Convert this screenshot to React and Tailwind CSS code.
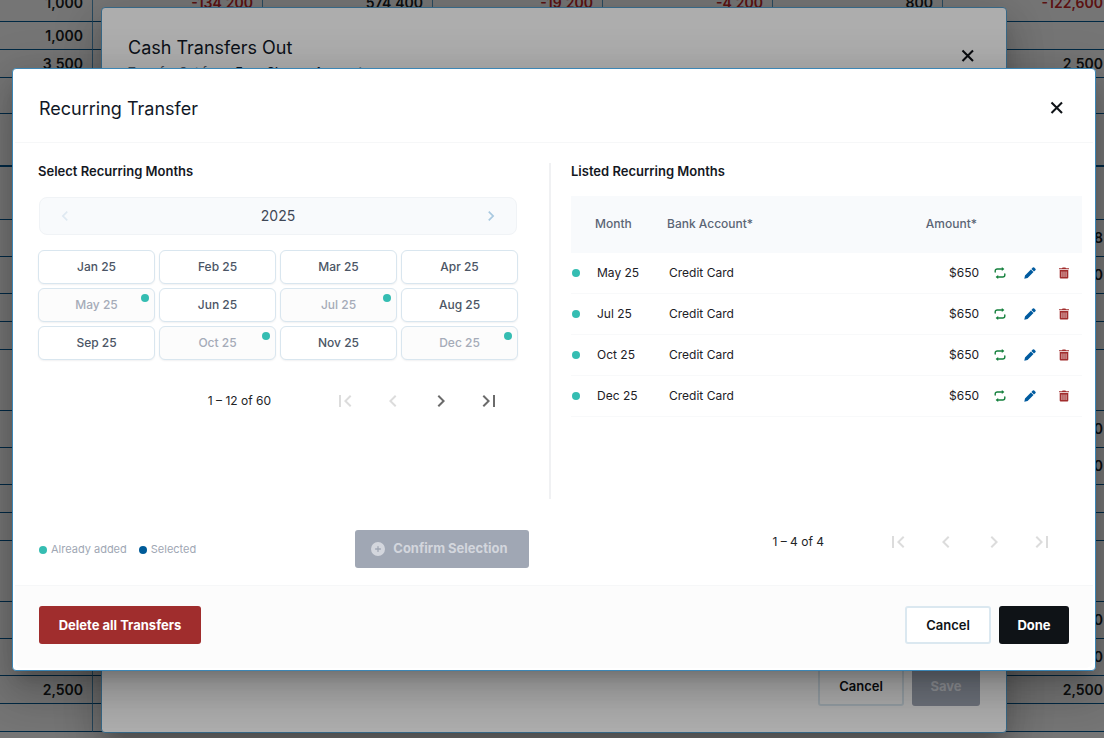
import { useState } from "react";
import { FaCirclePlus } from "react-icons/fa6";

// ─── Data ─────────────────────────────────────────────────────────────────────

const MONTHS = [
  { label: "Jan 25" },
  { label: "Feb 25" },
  { label: "Mar 25" },
  { label: "Apr 25" },
  { label: "May 25", added: true },
  { label: "Jun 25" },
  { label: "Jul 25", added: true },
  { label: "Aug 25" },
  { label: "Sep 25" },
  { label: "Oct 25", added: true },
  { label: "Nov 25" },
  { label: "Dec 25", added: true },
];

const TRANSFERS = MONTHS.filter((m) => m.added).map((m) => ({
  month: m.label,
  account: "Credit Card",
  amount: "$650",
}));

// Rows of the cash flow sheet behind the dialogs
const SHEET = [
  {
    h: "h-[37px]",
    cells: ["1,000", "-134,200", "574,400", "-19,200", "-4,200", "800", "-122,600"],
  },
  { h: "h-[28px]", cells: ["1,000"] },
  { h: "h-[28px]", cells: ["3,500", "", "", "", "", "", "2,500"] },
  { h: "h-[36px]", cells: [] },
  { h: "h-[53px]", cells: [], thick: true },
  { h: "h-[53px]", cells: [] },
  { h: "h-[37px]", cells: ["", "", "", "", "", "", "8"] },
  { h: "h-[37px]", cells: ["", "", "", "", "", "", "0"] },
  { h: "h-[28px]", cells: [] },
  { h: "h-[28px]", cells: [] },
  { h: "h-[61px]", cells: [] },
  { h: "h-[37px]", cells: ["", "", "", "", "", "", "0"] },
  { h: "h-[37px]", cells: ["", "", "", "", "", "", "0"] },
  { h: "h-[28px]", cells: [] },
  { h: "h-[28px]", cells: [] },
  { h: "h-[61px]", cells: [] },
  { h: "h-[37px]", cells: ["", "", "", "", "", "", "0"] },
  { h: "h-[37px]", cells: ["", "", "", "", "", "", "0"] },
  { h: "h-[28px]", cells: ["2,500", "", "", "", "", "", "2,500"] },
  { h: "h-[28px]", cells: [] },
];

const COLUMNS = [0, 1, 2, 3, 4, 5, 6];

const CHEVRONS = {
  first: "M18.41 16.59L13.82 12l4.59-4.59L17 6l-6 6 6 6zM6 6h2v12H6z",
  prev: "M15.41 7.41L14 6l-6 6 6 6 1.41-1.41L10.83 12z",
  next: "M10 6L8.59 7.41 13.17 12l-4.58 4.59L10 18l6-6z",
  last: "M5.59 7.41L10.18 12l-4.59 4.59L7 18l6-6-6-6zM16 6h2v12h-2z",
};

// ─── Small pieces ─────────────────────────────────────────────────────────────

function Chevron({ name, className }) {
  return (
    <svg className={className} viewBox="0 0 24 24" fill="currentColor">
      <path d={CHEVRONS[name]} />
    </svg>
  );
}

function RepeatIcon() {
  return (
    <svg className="w-3 h-3" viewBox="0 0 12 12" fill="currentColor">
      <path
        d="M1.2 5V4a2 2 0 0 1 2-2H8.5M10.8 7v1a2 2 0 0 1-2 2H3.5"
        fill="none"
        stroke="currentColor"
        strokeWidth={1.4}
        strokeLinecap="round"
      />
      <path d="M7.8 0L10.4 2L7.8 4zM4.2 8L1.6 10L4.2 12z" />
    </svg>
  );
}

function PencilIcon() {
  return (
    <svg className="w-3 h-3" viewBox="0 0 12 12" fill="currentColor">
      <path d="M0.3 11.7L1 8.4L6.9 2.5L9.5 5.1L3.6 11zM7.4 2L8.8 0.6a1 1 0 0 1 1.4 0L11.4 1.8a1 1 0 0 1 0 1.4L10 4.6z" />
    </svg>
  );
}

function TrashIcon() {
  return (
    <svg className="w-3 h-3" viewBox="0 0 12 12" fill="currentColor">
      <path d="M1 1.2h3L4.6 0.4h2.8L8 1.2h3v1.1H1z" />
      <path
        fillRule="evenodd"
        d="M1.7 3h8.6v7.6a1 1 0 0 1-1 1H2.7a1 1 0 0 1-1-1zM3.6 4.6v5.4h0.7V4.6zM5.65 4.6v5.4h0.7V4.6zM7.7 4.6v5.4h0.7V4.6z"
      />
    </svg>
  );
}

function CloseButton() {
  return (
    <button
      aria-label="Close"
      className="w-6 h-6 flex items-center justify-center text-[#0f1317]"
    >
      <svg
        className="w-6 h-6"
        viewBox="0 0 24 24"
        fill="none"
        stroke="currentColor"
        strokeWidth={2.1}
      >
        <path d="M6.5 6.5l10.5 10.5M17 6.5l-10.5 10.5" />
      </svg>
    </button>
  );
}

function Dot({ className }) {
  return <span className={`block w-2 h-2 rounded-full shrink-0 ${className}`} />;
}

function Pager({ text, hasNext }) {
  const nextColour = hasNext ? "text-[#6b6b6b]" : "text-[#dcdcdc]";
  const items = [
    { name: "first", label: "First page", colour: "text-[#dcdcdc]", off: true },
    { name: "prev", label: "Previous page", colour: "text-[#dcdcdc]", off: true },
    { name: "next", label: "Next page", colour: nextColour, off: !hasNext },
    { name: "last", label: "Last page", colour: nextColour, off: !hasNext },
  ];
  return (
    <div className="flex items-center justify-end h-12">
      <span className="text-xs text-[#222427]">{text}</span>
      <div className="flex ml-[50px]">
        {items.map((i) => (
          <button
            key={i.name}
            aria-label={i.label}
            disabled={i.off}
            className={`w-12 h-12 flex items-center justify-center ${i.colour}`}
          >
            <Chevron name={i.name} className="w-6 h-6" />
          </button>
        ))}
      </div>
    </div>
  );
}

// ─── Sheet in the background ──────────────────────────────────────────────────

function Sheet() {
  return (
    <div className="absolute inset-0 flex flex-col justify-end overflow-hidden pb-[6px] bg-white">
      <table className="table-fixed border-separate border-spacing-0 w-[1113px] shrink-0">
        <colgroup>
          <col className="w-[93px]" />
          {COLUMNS.slice(1).map((c) => (
            <col key={c} className="w-[170px]" />
          ))}
        </colgroup>
        <tbody>
          {SHEET.map((row, i) => (
            <tr key={i} className={row.h}>
              {COLUMNS.map((c) => (
                <td
                  key={c}
                  className={`p-0 pr-[9px] text-right text-sm font-semibold border-r border-r-[#5ba3d0] border-b-[#005b96] ${
                    row.thick ? "border-b-2" : "border-b"
                  } ${row.cells[c]?.startsWith("-") ? "text-[#c62828]" : "text-[#1b1f24]"}`}
                >
                  {row.cells[c]}
                </td>
              ))}
            </tr>
          ))}
        </tbody>
      </table>
    </div>
  );
}

// ─── Cash transfers dialog ────────────────────────────────────────────────────

function CashTransfersDialog() {
  return (
    <div className="absolute inset-0 bg-black/32 flex justify-center pl-1 pt-[7px] pb-[5px]">
      <section className="w-full max-w-[906px] rounded border border-[#5298c4] bg-white flex flex-col justify-between shadow-[0_11px_15px_-7px_rgba(0,0,0,0.2),0_24px_38px_3px_rgba(0,0,0,0.14),0_9px_46px_8px_rgba(0,0,0,0.12)]">
        <header className="flex items-start justify-between px-[26px] pt-[26px]">
          <div>
            <h2 className="text-[18px] leading-7 text-[#111827]">
              Cash Transfers Out
            </h2>
            <p className="text-xs leading-5 text-[#5b6472]">
              Transfer Out from:{" "}
              <span className="font-medium text-[#111827]">
                Easy Chase - Account
              </span>
            </p>
          </div>
          <div className="pt-[10px]">
            <CloseButton />
          </div>
        </header>
        <footer className="flex justify-end gap-2 px-[26px] pb-[26px]">
          <button className="h-[38px] w-[86px] rounded-[3px] border-2 border-[#dbe8f0] bg-white text-[13px] font-semibold text-[#0f1317]">
            Cancel
          </button>
          <button
            disabled
            className="h-[38px] w-[68px] rounded-[3px] bg-[#a0a7b4] text-[13px] font-bold text-[#d3d6dd]"
          >
            Save
          </button>
        </footer>
      </section>
    </div>
  );
}

// ─── Recurring transfer dialog ────────────────────────────────────────────────

function MonthPicker() {
  const [selected, setSelected] = useState([]);

  const toggle = (label) =>
    setSelected((prev) =>
      prev.includes(label) ? prev.filter((l) => l !== label) : [...prev, label],
    );

  return (
    <div className="w-[511px] shrink-0 pl-[23px]">
      <h3 className="text-[13px] leading-4 font-semibold text-[#14181f]">
        Select Recurring Months
      </h3>
      <div className="mt-[18px] ml-px w-[478px] h-[38px] px-[11px] flex items-center justify-between rounded-lg border border-[#f0f3f6] bg-[#f8fafc]">
        <button aria-label="Previous year" disabled className="p-1 text-[#dfe9f1]">
          <Chevron name="prev" className="w-5 h-5" />
        </button>
        <span className="text-sm text-[#3f4756]">2025</span>
        <button aria-label="Next year" className="p-1 text-[#a9c9e0]">
          <Chevron name="next" className="w-5 h-5" />
        </button>
      </div>
      <div className="mt-[15px] w-[480px] grid grid-cols-4 gap-1">
        {MONTHS.map((m) => (
          <button
            key={m.label}
            disabled={m.added}
            onClick={() => toggle(m.label)}
            className={`relative h-[34px] rounded-md border border-[#d9e6ef] text-xs font-medium shadow-[0_1px_2px_rgba(16,24,40,0.06)] ${
              m.added ? "bg-[#fcfcfc] text-[#a5abb8]" : "bg-white text-[#4b5565]"
            }`}
          >
            {m.label}
            {(m.added || selected.includes(m.label)) && (
              <Dot
                className={`absolute top-[5px] right-[5px] ${
                  m.added ? "bg-[#35bdb2]" : "bg-[#005b99]"
                }`}
              />
            )}
          </button>
        ))}
      </div>
      <div className="mt-[17px] pr-[13px]">
        <Pager text="1 – 12 of 60" hasNext />
      </div>
    </div>
  );
}

function TransferTable() {
  return (
    <div className="flex-1 min-w-0 pl-5 pr-[11px]">
      <h3 className="text-[13px] leading-4 font-semibold text-[#14181f]">
        Listed Recurring Months
      </h3>
      <table className="mt-[17px] w-full table-fixed border-separate border-spacing-0 text-xs text-[#1c2026]">
        <colgroup>
          <col className="w-6" />
          <col className="w-[72px]" />
          <col />
          <col className="w-[120px]" />
          <col className="w-[45px]" />
          <col className="w-[34px]" />
          <col className="w-6" />
        </colgroup>
        <thead>
          <tr className="h-[57px] bg-[#f8fafc] text-left text-[#5b6575]">
            <th />
            <th className="p-0 font-medium">Month</th>
            <th className="p-0 font-medium">Bank Account*</th>
            <th className="p-0 pr-[2px] font-medium text-right">Amount*</th>
            <th colSpan={3} />
          </tr>
        </thead>
        <tbody>
          {TRANSFERS.map((t) => (
            <tr key={t.month} className="h-[41px]">
              <td className="p-0 pl-px border-b border-[#f8f9fa]">
                <Dot className="bg-[#35bdb2]" />
              </td>
              <td className="p-0 pl-[2px] border-b border-[#f8f9fa]">{t.month}</td>
              <td className="p-0 pl-[2px] border-b border-[#f8f9fa]">{t.account}</td>
              <td className="p-0 text-right border-b border-[#f8f9fa]">{t.amount}</td>
              <td className="p-0 pl-[15px] border-b border-[#f8f9fa]">
                <button aria-label="Repeat" className="block text-[#15803d]">
                  <RepeatIcon />
                </button>
              </td>
              <td className="p-0 border-b border-[#f8f9fa]">
                <button aria-label="Edit" className="block text-[#005b9f]">
                  <PencilIcon />
                </button>
              </td>
              <td className="p-0 border-b border-[#f8f9fa]">
                <button aria-label="Delete" className="block text-[#a12d2d]">
                  <TrashIcon />
                </button>
              </td>
            </tr>
          ))}
        </tbody>
      </table>
    </div>
  );
}

function RecurringTransferDialog() {
  return (
    <div className="absolute inset-0 bg-black/32 flex items-center justify-center pl-1">
      <section className="w-full max-w-[1084px] rounded border border-[#3c86b5] bg-white p-[2px] shadow-[0_11px_15px_-7px_rgba(0,0,0,0.2),0_24px_38px_3px_rgba(0,0,0,0.14),0_9px_46px_8px_rgba(0,0,0,0.12)]">
        <header className="flex items-center justify-between h-[72px] px-6 pt-1 border-b border-[#f6f7f8]">
          <h2 className="pt-[2px] text-[18px] leading-7 text-[#111827]">
            Recurring Transfer
          </h2>
          <CloseButton />
        </header>

        <div className="flex pt-5">
          <MonthPicker />
          <div className="w-[2px] h-[336px] ml-[23px] bg-[#f0f1f3]" />
          <TransferTable />
        </div>

        <div className="flex items-center h-[86px] pl-6 pr-[3px]">
          <div className="flex items-center gap-3 pt-4 text-[11px] text-[#a0a7b4]">
            <span className="flex items-center gap-1">
              <Dot className="bg-[#35bdb2]" />
              Already added
            </span>
            <span className="flex items-center gap-1">
              <Dot className="bg-[#005b99]" />
              Selected
            </span>
          </div>
          <button
            disabled
            className="ml-[159px] mt-[14px] h-[38px] w-[174px] pl-4 pt-px flex items-center gap-2 rounded-[3px] bg-[#a0a7b4] text-[13px] font-bold text-[#d3d6dd]"
          >
            <FaCirclePlus size={14} />
            Confirm Selection
          </button>
          <div className="ml-auto pr-6">
            <Pager text="1 – 4 of 4" />
          </div>
        </div>

        <footer className="flex items-center h-[83px] px-6 gap-2 pb-[3px] rounded-b-lg border-t border-[#f6f7f8] bg-[#fcfcfc]">
          <button className="h-[38px] w-[162px] pt-[2px] mr-auto rounded-[3px] bg-[#a02d2d] text-[13px] font-bold text-white">
            Delete all Transfers
          </button>
          <button className="h-[38px] w-[86px] pt-[2px] rounded-[3px] border-2 border-[#dbe8f0] bg-white text-[13px] font-semibold text-[#0f1317]">
            Cancel
          </button>
          <button className="h-[38px] w-[70px] pt-[2px] rounded-[3px] bg-[#0f1317] text-[13px] font-bold text-white">
            Done
          </button>
        </footer>
      </section>
    </div>
  );
}

// ─── App ──────────────────────────────────────────────────────────────────────

export default function App() {
  return (
    <main className="relative h-screen overflow-hidden font-['Inter',sans-serif]">
      <Sheet />
      <CashTransfersDialog />
      <RecurringTransferDialog />
    </main>
  );
}
